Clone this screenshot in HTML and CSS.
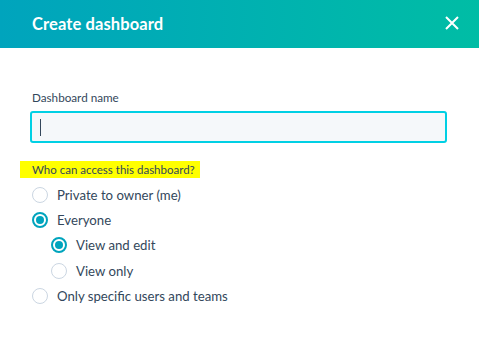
FILE: index.html
```html
<!DOCTYPE html>
<html lang="en">
<head>
    <meta charset="UTF-8">
    <title>Create dashboard</title>
    <link rel="stylesheet" href="styles.css">
</head>
<body>
    <div class="modal">
        <div class="modal-header">
            <h1 class="modal-title">Create dashboard</h1>
            <span class="close-btn">
                <svg width="14" height="14" viewBox="0 0 14 14"><path d="M1 1L13 13M13 1L1 13" stroke="#fff" stroke-width="2" fill="none"/></svg>
            </span>
        </div>
        <div class="modal-body">
            <label class="field-label" for="name">Dashboard name</label>
            <div class="input-box"><span class="caret"></span></div>

            <div class="access-title"><span class="highlight">Who can access this dashboard?</span></div>

            <div class="radio-row">
                <span class="radio"></span>
                <span class="radio-text">Private to owner (me)</span>
            </div>
            <div class="radio-row">
                <span class="radio checked"></span>
                <span class="radio-text">Everyone</span>
            </div>
            <div class="radio-row sub">
                <span class="radio checked"></span>
                <span class="radio-text">View and edit</span>
            </div>
            <div class="radio-row sub">
                <span class="radio"></span>
                <span class="radio-text">View only</span>
            </div>
            <div class="radio-row">
                <span class="radio"></span>
                <span class="radio-text">Only specific users and teams</span>
            </div>
        </div>
    </div>
</body>
</html>
```

FILE: styles.css
```css
body {
    margin: 0;
    font-family: Lato, "Noto Sans", sans-serif;
    color: #33475b;
    background: #fff;
}
.modal {
    width: 479px;
    height: 355px;
    background: #fff;
}
.modal-header {
    height: 48px;
    background: linear-gradient(to right, #00a4bd, #00bda5);
    display: flex;
    align-items: center;
    justify-content: space-between;
    padding: 0 20px 0 32px;
}
.modal-title {
    margin: 0;
    color: #fff;
    font-size: 16.5px;
    font-weight: bold;
    letter-spacing: 0.1px;
}
.close-btn {
    display: flex;
    padding-bottom: 2px;
}
.modal-body {
    padding: 41px 32px 0 30px;
}
.field-label {
    display: block;
    font-size: 11.7px;
    padding-left: 2px;
    line-height: 16px;
}
.input-box {
    margin-top: 6px;
    height: 28px;
    border: 2px solid #00d0e4;
    border-radius: 3px;
    background: #f5f8fa;
    display: flex;
    align-items: center;
    padding-left: 8px;
}
.caret {
    width: 1px;
    height: 17px;
    background: #33475b;
}
.access-title {
    margin-top: 18px;
    margin-left: -10px;
    height: 17px;
    display: flex;
}
.highlight {
    background: #ffff00;
    font-size: 11.5px;
    line-height: 17px;
    padding: 0 5px 0 12px;
    color: #33475b;
}
.radio-row {
    display: flex;
    align-items: center;
    height: 25.3px;
    padding-left: 2px;
    font-size: 13.2px;
}
.access-title + .radio-row {
    margin-top: 4px;
}
.radio-row.sub {
    padding-left: 21px;
}
.radio {
    width: 16px;
    height: 16px;
    box-sizing: border-box;
    border: 1px solid #cbd6e2;
    border-radius: 50%;
    margin-right: 9px;
    display: flex;
    align-items: center;
    justify-content: center;
}
.radio.checked {
    border: 2px solid #00a4bd;
}
.radio.checked::after {
    content: "";
    width: 8px;
    height: 8px;
    border-radius: 50%;
    background: #00a4bd;
}
```
